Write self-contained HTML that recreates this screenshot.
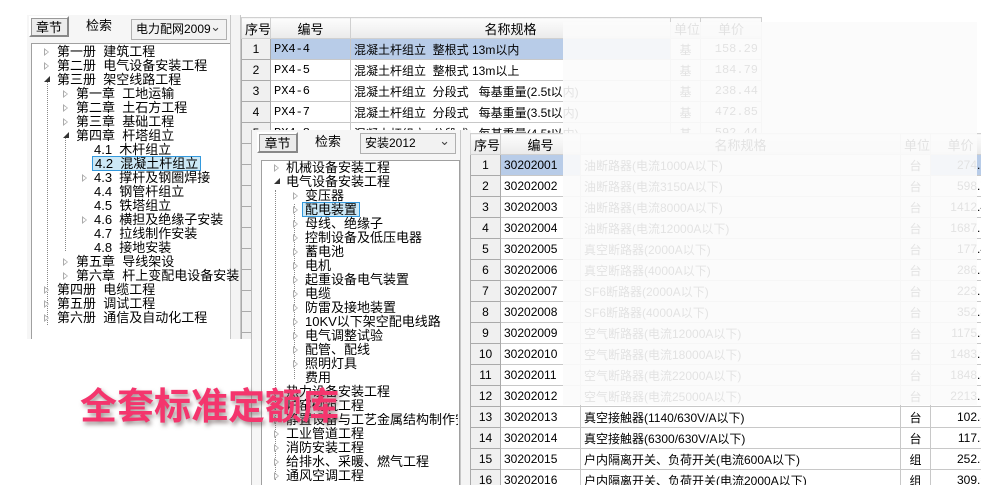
<!DOCTYPE html>
<html><head><meta charset="utf-8"><style>
*{margin:0;padding:0;box-sizing:border-box}
body{width:1000px;height:500px;overflow:hidden;background:#fff;position:relative;font-family:"Liberation Sans","WenQuanYi Zen Hei","Noto Sans CJK SC",sans-serif;font-size:13px;color:#000}
.abs{position:absolute}
.win{position:absolute;background:#f0f0f0}
.tab{position:absolute;height:21px;line-height:19px;text-align:center;font-size:13px;background:#f4f4f4;border:1px solid #d8d8d8}
.tab.on{border:2px solid #fff;border-right-color:#888;border-bottom-color:#888;background:#ececec;box-shadow:inset 1px 1px 0 #999}
.combo{position:absolute;height:21px;border:1px solid #b0b0b0;background:#f2f2f2;font-size:12px;line-height:19px;padding-left:4px}
.combo:after{content:"⌄";position:absolute;right:5px;top:-3px;font-size:13px;color:#444}
.tree{position:absolute;background:#fff;border:1px solid #a0a0a0;overflow:hidden}
.it{position:absolute;white-space:nowrap;line-height:14px;font-size:13px}
.ar{position:absolute;width:0;height:0;border-left:5px solid #aaa;border-top:4px solid transparent;border-bottom:4px solid transparent;margin-top:-4px}
.ar:after{content:"";position:absolute;left:-4px;top:-2px;border-left:3px solid #fff;border-top:2px solid transparent;border-bottom:2px solid transparent}
.ex{position:absolute;width:0;height:0;border-bottom:6px solid #333;border-left:6px solid transparent;margin-top:-4px}
table{position:absolute;border-collapse:collapse;table-layout:fixed;background:#fff}
td{border:1px solid #c8c8c8;height:21px;padding:0 3px;white-space:nowrap;overflow:hidden;font-size:12px}
tr.h td{background:linear-gradient(#fdfdfd,#eaeaea);text-align:center;font-size:13px;border-color:#d0d0d0}
td.n{text-align:center;background:#f0f0f0;border-color:#aaa}
td.s{background:#b8cce8}
td.r{text-align:right}
td.c{text-align:center}
.mono{font-family:"Liberation Mono","WenQuanYi Zen Hei",monospace;font-size:12px}
.vl{position:absolute;border-left:1px dotted #888}
</style></head><body>

<!-- Window 1 -->
<div class="win" style="left:27px;top:15px;width:213px;height:324px;background:#f6f6f6"></div>
<div class="tab on" style="left:29px;top:16px;width:40px">章节</div>
<div class="tab" style="left:74px;top:16px;width:50px;border:none;background:none">检索</div>
<div class="combo" style="left:131px;top:19px;width:96px">电力配网2009</div>
<div class="tree" style="left:31px;top:43px;width:200px;height:296px;border-bottom:none"></div>
<div class="abs" style="left:230px;top:15px;width:11px;height:324px;border-left:1px solid #c8c8c8;border-right:1px solid #c8c8c8;background:#f4f4f4"></div>
<div class="vl" style="left:47px;top:80px;height:245px"></div>
<div class="vl" style="left:65px;top:136px;height:115px"></div>
<div class="abs" style="left:27px;top:45px">
<span class="ar" style="left:17px;top:7px"></span><span class="it" style="left:30px;top:0">第一册&nbsp; 建筑工程</span>
<span class="ar" style="left:17px;top:21px"></span><span class="it" style="left:30px;top:14px">第二册&nbsp; 电气设备安装工程</span>
<span class="ex" style="left:17px;top:35px"></span><span class="it" style="left:30px;top:28px">第三册&nbsp; 架空线路工程</span>
<span class="ar" style="left:36px;top:49px"></span><span class="it" style="left:49px;top:42px">第一章&nbsp; 工地运输</span>
<span class="ar" style="left:36px;top:63px"></span><span class="it" style="left:49px;top:56px">第二章&nbsp; 土石方工程</span>
<span class="ar" style="left:36px;top:77px"></span><span class="it" style="left:49px;top:70px">第三章&nbsp; 基础工程</span>
<span class="ex" style="left:36px;top:91px"></span><span class="it" style="left:49px;top:84px">第四章&nbsp; 杆塔组立</span>
<span class="it" style="left:67px;top:98px">4.1&nbsp; 木杆组立</span>
<span class="it" style="left:65px;top:111px;background:#cce8f6;border:1px solid #3399dd;padding:0 2px;line-height:13px">4.2&nbsp; 混凝土杆组立</span>
<span class="ar" style="left:55px;top:133px"></span><span class="it" style="left:67px;top:126px">4.3&nbsp; 撑杆及钢圈焊接</span>
<span class="it" style="left:67px;top:140px">4.4&nbsp; 钢管杆组立</span>
<span class="it" style="left:67px;top:154px">4.5&nbsp; 铁塔组立</span>
<span class="ar" style="left:55px;top:175px"></span><span class="it" style="left:67px;top:168px">4.6&nbsp; 横担及绝缘子安装</span>
<span class="it" style="left:67px;top:182px">4.7&nbsp; 拉线制作安装</span>
<span class="it" style="left:67px;top:196px">4.8&nbsp; 接地安装</span>
<span class="ar" style="left:36px;top:217px"></span><span class="it" style="left:49px;top:210px">第五章&nbsp; 导线架设</span>
<span class="ar" style="left:36px;top:231px"></span><span class="it" style="left:49px;top:224px">第六章&nbsp; 杆上变配电设备安装</span>
<span class="ar" style="left:17px;top:245px"></span><span class="it" style="left:30px;top:238px">第四册&nbsp; 电缆工程</span>
<span class="ar" style="left:17px;top:259px"></span><span class="it" style="left:30px;top:252px">第五册&nbsp; 调试工程</span>
<span class="ar" style="left:17px;top:273px"></span><span class="it" style="left:30px;top:266px">第六册&nbsp; 通信及自动化工程</span>
</div>

<!-- Grid 1 -->
<table style="left:241px;top:17px;width:520px;border-left:1px solid #8aa0c0;border-top:1px solid #8aa0c0">
<colgroup><col style="width:29px"><col style="width:80px"><col style="width:320px"><col style="width:30px"><col style="width:61px"></colgroup>
<tr class="h"><td>序号</td><td>编号</td><td>名称规格</td><td>单位</td><td>单价</td></tr>
<tr><td class="n">1</td><td class="s mono">PX4-4</td><td class="s">混凝土杆组立&nbsp; 整根式 13m以内</td><td class="c">基</td><td class="r mono">158.29</td></tr>
<tr><td class="n">2</td><td class="mono">PX4-5</td><td>混凝土杆组立&nbsp; 整根式 13m以上</td><td class="c">基</td><td class="r mono">184.79</td></tr>
<tr><td class="n">3</td><td class="mono">PX4-6</td><td>混凝土杆组立&nbsp; 分段式 &nbsp; 每基重量(2.5t以内)</td><td class="c">基</td><td class="r mono">238.44</td></tr>
<tr><td class="n">4</td><td class="mono">PX4-7</td><td>混凝土杆组立&nbsp; 分段式 &nbsp; 每基重量(3.5t以内)</td><td class="c">基</td><td class="r mono">472.85</td></tr>
<tr><td class="n">5</td><td class="mono">PX4-8</td><td>混凝土杆组立&nbsp; 分段式 &nbsp; 每基重量(4.5t以内)</td><td class="c">基</td><td class="r mono">592.44</td></tr>
<tr><td class="n"></td><td></td><td></td><td></td><td></td></tr>
<tr><td class="n"></td><td></td><td></td><td></td><td></td></tr>
<tr><td class="n"></td><td></td><td></td><td></td><td></td></tr>
<tr><td class="n"></td><td></td><td></td><td></td><td></td></tr>
<tr><td class="n"></td><td></td><td></td><td></td><td></td></tr>
<tr><td class="n"></td><td></td><td></td><td></td><td></td></tr>
<tr><td class="n"></td><td></td><td></td><td></td><td></td></tr>
<tr><td class="n"></td><td></td><td></td><td></td><td></td></tr>
<tr><td class="n"></td><td></td><td></td><td></td><td></td></tr>
<tr><td class="n"></td><td></td><td></td><td></td><td></td></tr>
</table>
<div class="abs" style="left:240px;top:339px;width:12px;height:161px;background:#fff"></div>

<!-- Window 2 -->
<div class="win" style="left:251px;top:130px;width:220px;height:355px;background:#f6f6f6;border-left:1px solid #bbb"></div>
<div class="tab on" style="left:257px;top:132px;width:41px">章节</div>
<div class="tab" style="left:303px;top:132px;width:50px;border:none;background:none">检索</div>
<div class="combo" style="left:360px;top:133px;width:96px">安装2012</div>
<div class="tree" style="left:261px;top:160px;width:199px;height:325px;border-bottom:none"></div>
<div class="abs" style="left:460px;top:130px;width:10px;height:355px;border-left:1px solid #c8c8c8;background:#f4f4f4"></div>
<div class="vl" style="left:275px;top:190px;height:290px"></div>
<div class="vl" style="left:294px;top:204px;height:175px"></div>
<div class="abs" style="left:261px;top:161px">
<span class="ar" style="left:13px;top:7px"></span><span class="it" style="left:25px;top:0">机械设备安装工程</span>
<span class="ex" style="left:13px;top:21px"></span><span class="it" style="left:25px;top:14px">电气设备安装工程</span>
<span class="ar" style="left:32px;top:35px"></span><span class="it" style="left:44px;top:28px">变压器</span>
<span class="ar" style="left:32px;top:49px"></span><span class="it" style="left:41px;top:41px;background:#cce8f6;border:1px solid #3399dd;padding:0 2px;line-height:13px">配电装置</span>
<span class="ar" style="left:32px;top:63px"></span><span class="it" style="left:44px;top:56px">母线、绝缘子</span>
<span class="ar" style="left:32px;top:77px"></span><span class="it" style="left:44px;top:70px">控制设备及低压电器</span>
<span class="ar" style="left:32px;top:91px"></span><span class="it" style="left:44px;top:84px">蓄电池</span>
<span class="ar" style="left:32px;top:105px"></span><span class="it" style="left:44px;top:98px">电机</span>
<span class="ar" style="left:32px;top:119px"></span><span class="it" style="left:44px;top:112px">起重设备电气装置</span>
<span class="ar" style="left:32px;top:133px"></span><span class="it" style="left:44px;top:126px">电缆</span>
<span class="ar" style="left:32px;top:147px"></span><span class="it" style="left:44px;top:140px">防雷及接地装置</span>
<span class="ar" style="left:32px;top:161px"></span><span class="it" style="left:44px;top:154px">10KV以下架空配电线路</span>
<span class="ar" style="left:32px;top:175px"></span><span class="it" style="left:44px;top:168px">电气调整试验</span>
<span class="ar" style="left:32px;top:189px"></span><span class="it" style="left:44px;top:182px">配管、配线</span>
<span class="ar" style="left:32px;top:203px"></span><span class="it" style="left:44px;top:196px">照明灯具</span>
<span class="it" style="left:44px;top:210px">费用</span>
<span class="ar" style="left:13px;top:231px"></span><span class="it" style="left:25px;top:224px">热力设备安装工程</span>
<span class="ar" style="left:13px;top:245px"></span><span class="it" style="left:25px;top:238px">炉窑砌筑工程</span>
<span class="ar" style="left:13px;top:259px"></span><span class="it" style="left:25px;top:252px;width:172px;overflow:hidden">静置设备与工艺金属结构制作安装</span>
<span class="ar" style="left:13px;top:273px"></span><span class="it" style="left:25px;top:266px">工业管道工程</span>
<span class="ar" style="left:13px;top:287px"></span><span class="it" style="left:25px;top:280px">消防安装工程</span>
<span class="ar" style="left:13px;top:301px"></span><span class="it" style="left:25px;top:294px">给排水、采暖、燃气工程</span>
<span class="ar" style="left:13px;top:315px"></span><span class="it" style="left:25px;top:308px">通风空调工程</span>
</div>

<!-- Grid 2 -->
<div class="abs" style="left:470px;top:133px;width:511px;height:352px;overflow:hidden">
<table style="left:0;top:0;width:520px;border-left:1px solid #8aa0c0;border-top:1px solid #8aa0c0">
<colgroup><col style="width:30px"><col style="width:80px"><col style="width:320px"><col style="width:30px"><col style="width:60px"></colgroup>
<tr class="h"><td>序号</td><td>编号</td><td>名称规格</td><td>单位</td><td>单价</td></tr>
<tr><td class="n">1</td><td class="s">30202001</td><td>油断路器(电流1000A以下)</td><td class="c">台</td><td class="r s">274.1</td></tr>
<tr><td class="n">2</td><td>30202002</td><td>油断路器(电流3150A以下)</td><td class="c">台</td><td class="r">598.7</td></tr>
<tr><td class="n">3</td><td>30202003</td><td>油断路器(电流8000A以下)</td><td class="c">台</td><td class="r">1412.4</td></tr>
<tr><td class="n">4</td><td>30202004</td><td>油断路器(电流12000A以下)</td><td class="c">台</td><td class="r">1687.6</td></tr>
<tr><td class="n">5</td><td>30202005</td><td>真空断路器(2000A以下)</td><td class="c">台</td><td class="r">177.4</td></tr>
<tr><td class="n">6</td><td>30202006</td><td>真空断路器(4000A以下)</td><td class="c">台</td><td class="r">286.3</td></tr>
<tr><td class="n">7</td><td>30202007</td><td>SF6断路器(2000A以下)</td><td class="c">台</td><td class="r">223.7</td></tr>
<tr><td class="n">8</td><td>30202008</td><td>SF6断路器(4000A以下)</td><td class="c">台</td><td class="r">352.3</td></tr>
<tr><td class="n">9</td><td>30202009</td><td>空气断路器(电流12000A以下)</td><td class="c">台</td><td class="r">1175.3</td></tr>
<tr><td class="n">10</td><td>30202010</td><td>空气断路器(电流18000A以下)</td><td class="c">台</td><td class="r">1483.9</td></tr>
<tr><td class="n">11</td><td>30202011</td><td>空气断路器(电流22000A以下)</td><td class="c">台</td><td class="r">1848.3</td></tr>
<tr><td class="n">12</td><td>30202012</td><td>空气断路器(电流25000A以下)</td><td class="c">台</td><td class="r">2213.2</td></tr>
<tr><td class="n">13</td><td>30202013</td><td>真空接触器(1140/630V/A以下)</td><td class="c">台</td><td class="r">102.8</td></tr>
<tr><td class="n">14</td><td>30202014</td><td>真空接触器(6300/630V/A以下)</td><td class="c">台</td><td class="r">117.5</td></tr>
<tr><td class="n">15</td><td>30202015</td><td>户内隔离开关、负荷开关(电流600A以下)</td><td class="c">组</td><td class="r">252.8</td></tr>
<tr><td class="n">16</td><td>30202016</td><td>户内隔离开关、负荷开关(电流2000A以下)</td><td class="c">组</td><td class="r">309.9</td></tr>
</table>
</div>

<!-- fade overlay -->
<div class="abs" style="left:563px;top:22px;width:414px;height:383px;background:rgba(251,251,251,0.9)"></div>

<!-- red title -->
<div class="abs" style="left:80px;top:380px;font-family:'Noto Sans CJK SC','WenQuanYi Zen Hei',sans-serif;font-weight:bold;font-size:37px;line-height:46px;color:#f4356d;text-shadow:2px 3px 4px rgba(80,60,60,0.55)">全套标准定额库</div>
</body></html>
